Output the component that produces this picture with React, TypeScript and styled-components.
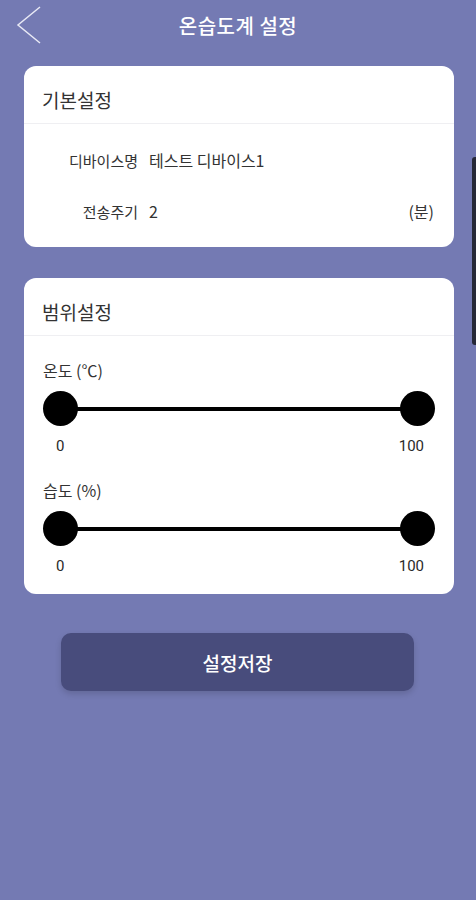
import styled, { createGlobalStyle } from "styled-components";

const Global = createGlobalStyle`
  html, body { margin: 0; padding: 0; background: #747ab3; }
  body { font-family: "Noto Sans CJK KR", "Noto Sans", sans-serif; }
`;

type Range = { label: string; min: number; max: number };

const ranges: Range[] = [
  { label: "온도 (℃)", min: 0, max: 100 },
  { label: "습도 (%)", min: 0, max: 100 },
];

export default function App() {
  return (
    <Screen>
      <Global />
      <TopBar>
        <BackButton aria-label="back">
          <svg width="26" height="38" viewBox="0 0 26 38">
            <path d="M24 1 L2 19 L24 37" fill="none" stroke="#e8e9f5" strokeWidth="1.5" />
          </svg>
        </BackButton>
        <Title>온습도계 설정</Title>
      </TopBar>

      <Card>
        <CardHeader>기본설정</CardHeader>
        <InfoBody>
          <InfoRow>
            <InfoLabel>디바이스명</InfoLabel>
            <InfoValue>테스트 디바이스1</InfoValue>
          </InfoRow>
          <InfoRow>
            <InfoLabel>전송주기</InfoLabel>
            <InfoValue>2</InfoValue>
            <Unit>(분)</Unit>
          </InfoRow>
        </InfoBody>
      </Card>

      <Card $gap={31}>
        <CardHeader>범위설정</CardHeader>
        <RangeBody>
          {ranges.map((r) => (
            <RangeBlock key={r.label}>
              <RangeLabel>{r.label}</RangeLabel>
              <Slider>
                <Thumb />
                <Track />
                <Thumb />
              </Slider>
              <Scale>
                <ScaleNum>{r.min}</ScaleNum>
                <ScaleNum>{r.max}</ScaleNum>
              </Scale>
            </RangeBlock>
          ))}
        </RangeBody>
      </Card>

      <SaveButton>설정저장</SaveButton>
      <EdgeHandle />
    </Screen>
  );
}

const Screen = styled.div`
  position: relative;
  width: 476px;
  height: 900px;
  background: #747ab3;
  display: flex;
  flex-direction: column;
  align-items: center;
  overflow: hidden;
`;

const TopBar = styled.div`
  position: relative;
  width: 100%;
  height: 50px;
  display: flex;
  align-items: center;
  justify-content: center;
`;

const BackButton = styled.div`
  position: absolute;
  left: 16px;
  top: 6px;
  display: flex;
`;

const Title = styled.div`
  color: #ffffff;
  font-size: 20px;
  font-weight: 500;
  line-height: 24px;
  margin-top: 2px;
  letter-spacing: 0.5px;
`;

const Card = styled.div<{ $gap?: number }>`
  width: 430px;
  margin-top: ${(p) => p.$gap ?? 16}px;
  margin-left: 2px;
  background: #ffffff;
  border-radius: 12px;
  overflow: hidden;
`;

const CardHeader = styled.div`
  height: 58px;
  box-sizing: border-box;
  padding: 22px 0 0 18px;
  font-size: 19px;
  line-height: 24px;
  color: #333333;
  border-bottom: 1px solid #efeff2;
`;

const InfoBody = styled.div`
  display: flex;
  flex-direction: column;
  padding: 22px 0 22px;
  gap: 23px;
`;

const InfoRow = styled.div`
  display: flex;
  align-items: center;
  height: 28px;
  padding-right: 20px;
`;

const InfoLabel = styled.div`
  width: 114px;
  text-align: right;
  font-size: 15px;
  color: #333333;
`;

const InfoValue = styled.div`
  margin-left: 11px;
  font-size: 16px;
  color: #333333;
  flex: 1;
`;

const Unit = styled.div`
  font-size: 16px;
  color: #333333;
`;

const RangeBody = styled.div`
  display: flex;
  flex-direction: column;
  padding: 22px 19px 18px 19px;
  gap: 22px;
`;

const RangeBlock = styled.div`
  display: flex;
  flex-direction: column;
`;

const RangeLabel = styled.div`
  font-size: 16px;
  line-height: 24px;
  height: 24px;
  color: #333333;
`;

const Slider = styled.div`
  display: flex;
  align-items: center;
  height: 35px;
  margin-top: 9px;
`;

const Thumb = styled.div`
  width: 35px;
  height: 35px;
  border-radius: 50%;
  background: #000000;
  flex: none;
`;

const Track = styled.div`
  flex: 1;
  height: 4px;
  background: #000000;
  margin: 0 -2px;
`;

const Scale = styled.div`
  display: flex;
  justify-content: space-between;
  margin-top: 10px;
  padding: 0 11px 0 13px;
`;

const ScaleNum = styled.div`
  font-family: "Roboto", "Noto Sans", sans-serif;
  font-size: 15px;
  line-height: 20px;
  color: #2a2a2a;
`;

const SaveButton = styled.div`
  width: 353px;
  height: 58px;
  margin-top: 39px;
  margin-left: -1px;
  background: #484c7c;
  border-radius: 10px;
  box-shadow: 0 3px 6px rgba(0, 0, 0, 0.15);
  display: flex;
  align-items: center;
  justify-content: center;
  color: #ffffff;
  font-size: 19px;
  font-weight: 500;
`;

const EdgeHandle = styled.div`
  position: absolute;
  right: 0;
  top: 157px;
  width: 4px;
  height: 188px;
  background: #262838;
  border-radius: 3px 0 0 3px;
`;
